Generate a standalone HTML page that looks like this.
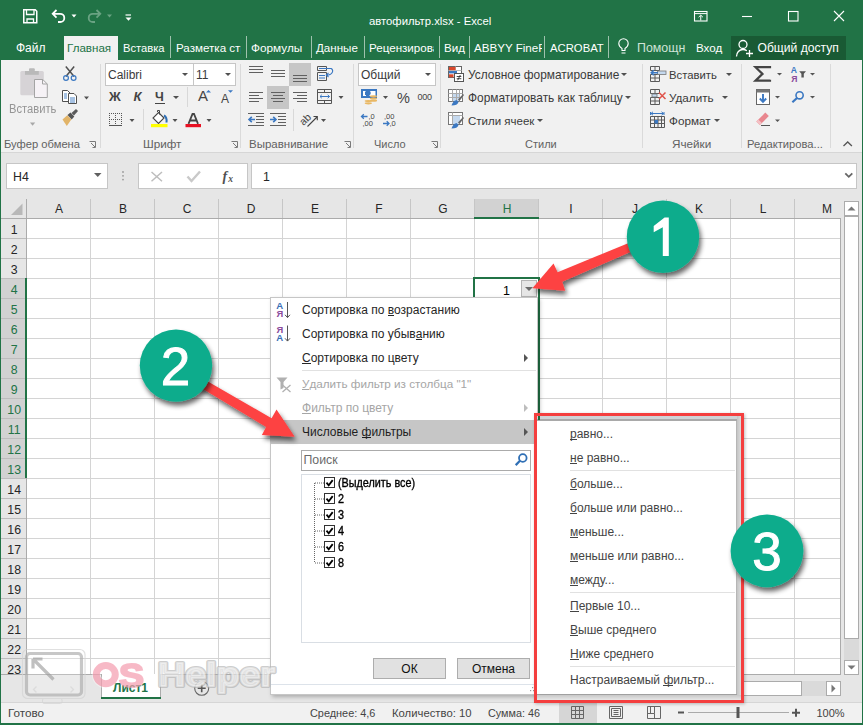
<!DOCTYPE html>
<html><head><meta charset="utf-8">
<style>
*{box-sizing:border-box;margin:0;padding:0}
html,body{width:863px;height:725px;overflow:hidden;background:#fff}
body{position:relative;font-family:"Liberation Sans",sans-serif;font-size:12px;color:#262626}
.a{position:absolute}
.t{position:absolute;white-space:nowrap;line-height:12px}
svg{position:absolute;overflow:visible}
.tab{color:#fff}
.tsep{position:absolute;top:36px;width:1px;height:22px;background:#9fc2ad}
.gsep{position:absolute;top:64px;width:1px;height:84px;background:#dadada}
.gl{position:absolute;white-space:nowrap;line-height:12px;color:#616161}
.rb{position:absolute;white-space:nowrap;line-height:12px;color:#3a3a3a}
.dd{position:absolute;width:0;height:0;border-left:3px solid transparent;border-right:3px solid transparent;border-top:3px solid #505050}
.mi{position:absolute;white-space:nowrap;line-height:12px;color:#444;left:302px}
.si{position:absolute;white-space:nowrap;line-height:12px;color:#444;left:570px}
u{text-decoration:none;border-bottom:1px solid currentColor;display:inline-block;line-height:12px;height:11.8px}
</style></head><body>

<div class="a" style="left:0;top:0;width:863px;height:60px;background:#217346"></div>
<!-- QAT -->
<svg style="left:0;top:0" width="150" height="36">
 <path d="M23.75 9.75h11.5l1.5 1.5v11.5h-13z" fill="none" stroke="#fff" stroke-width="1.5"/>
 <path d="M26.5 10v4.5h7.5V10" fill="none" stroke="#fff" stroke-width="1.3"/>
 <path d="M27 22.5v-3.5h6.5v3.5" fill="none" stroke="#fff" stroke-width="1.3"/>
 <path d="M56.5 10l-3.8 3.8 3.8 3.8M53 13.8h7.2a4.1 4.1 0 0 1 0 8.2h-2.2" fill="none" stroke="#fff" stroke-width="1.8"/>
 <path d="M71.5 14.5h5l-2.5 3z" fill="#fff"/>
 <path d="M96.5 10l3.8 3.8-3.8 3.8M100 13.8h-7.2a4.1 4.1 0 0 0 0 8.2h2.2" fill="none" stroke="#6aa383" stroke-width="1.8"/>
 <path d="M107 14.5h5l-2.5 3z" fill="#6aa383"/>
 <path d="M125.5 15h5.5" stroke="#fff" stroke-width="1.2"/>
 <path d="M125.5 17.5h6l-3 3.3z" fill="#fff"/>
</svg>
<div class="t" style="left:369px;top:15px;color:#fff;font-size:11.3px">автофильтр.xlsx - Excel</div>
<!-- window controls -->
<svg style="left:680px;top:0" width="183" height="36">
 <rect x="14.5" y="11.5" width="12.5" height="9.5" fill="none" stroke="#fff" stroke-width="1.1"/>
 <path d="M14.5 13.6h12.5" stroke="#fff" stroke-width="1"/>
 <path d="M20.75 20.5v-5M18.6 17.2l2.15-2.1 2.15 2.1" fill="none" stroke="#fff" stroke-width="1"/>
 <path d="M62 16.5h10" stroke="#fff" stroke-width="1.1"/>
 <rect x="108.5" y="11.5" width="9.5" height="9.5" fill="none" stroke="#fff" stroke-width="1.1"/>
 <path d="M154 11l10 10M164 11l-10 10" stroke="#fff" stroke-width="1.1"/>
</svg>
<!-- tabs -->
<div class="t tab" style="left:16px;top:42px">Файл</div>
<div class="a" style="left:64px;top:36px;width:54px;height:24px;background:#f1f1f1"></div>
<div class="t" style="left:67px;top:42px;color:#217346;font-size:11.6px">Главная</div>
<div class="t tab" style="left:123px;top:42px;font-size:11.2px">Вставка</div>
<div class="tsep" style="left:170px"></div>
<div class="a" style="left:175px;top:38px;width:66px;height:20px;overflow:hidden"><div class="t tab" style="left:1px;top:4px;font-size:11.6px">Разметка страницы</div></div>
<div class="tsep" style="left:246px"></div>
<div class="t tab" style="left:251px;top:42px;font-size:11.8px">Формулы</div>
<div class="tsep" style="left:311px"></div>
<div class="t tab" style="left:316px;top:42px;font-size:11.6px">Данные</div>
<div class="tsep" style="left:364px"></div>
<div class="a" style="left:368px;top:38px;width:65.5px;height:20px;overflow:hidden"><div class="t tab" style="left:1px;top:4px;font-size:11.6px">Рецензирование</div></div>
<div class="tsep" style="left:439px"></div>
<div class="t tab" style="left:444px;top:42px;font-size:11.6px">Вид</div>
<div class="tsep" style="left:469px"></div>
<div class="a" style="left:473px;top:38px;width:69px;height:20px;overflow:hidden"><div class="t tab" style="left:1px;top:4px;font-size:11.6px">ABBYY FineReader</div></div>
<div class="tsep" style="left:544px"></div>
<div class="t tab" style="left:550px;top:42px;font-size:11.3px">ACROBAT</div>
<div class="tsep" style="left:608px"></div>
<svg style="left:617px;top:38px" width="14" height="20">
 <path d="M5 12.5v-2c-2-1.2-3.2-2.7-3.2-5a4.7 4.7 0 0 1 9.4 0c0 2.3-1.2 3.8-3.2 5v2zM4.5 15h4" fill="none" stroke="#fff" stroke-width="1.1"/>
</svg>
<div class="t" style="left:637px;top:41.5px;font-size:12.4px;color:#d0e3d7">Помощн</div>
<div class="t tab" style="left:696px;top:42px;font-size:11.6px">Вход</div>
<div class="a" style="left:731px;top:36px;width:115px;height:24px;background:#195a34"></div>
<svg style="left:734px;top:37px" width="22" height="22">
 <circle cx="9" cy="7.5" r="4" fill="none" stroke="#fff" stroke-width="1.3"/>
 <path d="M2.5 19.5c0-4 2.8-7 6.5-7 1.5 0 2.8.5 3.8 1.2" fill="none" stroke="#fff" stroke-width="1.3"/>
 <path d="M15.5 13v7M12 16.5h7" stroke="#fff" stroke-width="1.3"/>
</svg>
<div class="t tab" style="left:757.5px;top:41.5px;font-size:12.1px">Общий доступ</div>

<div class="a" style="left:1px;top:60px;width:861px;height:93px;background:#f1f1f1;border-bottom:1px solid #d6d6d6"></div>
<div class="gsep" style="left:100px"></div>
<div class="gsep" style="left:240px"></div>
<div class="gsep" style="left:353px"></div>
<div class="gsep" style="left:440px"></div>
<div class="gsep" style="left:642px"></div>
<div class="gsep" style="left:741px"></div>
<div class="gsep" style="left:830px"></div>
<!-- group labels -->
<div class="gl" style="left:4px;top:138px;font-size:11.2px">Буфер обмена</div>
<div class="gl" style="left:143px;top:138px;font-size:11.7px">Шрифт</div>
<div class="gl" style="left:249px;top:138px;font-size:11.5px">Выравнивание</div>
<div class="gl" style="left:374px;top:138px;font-size:11px">Число</div>
<div class="gl" style="left:525px;top:138px;font-size:11px">Стили</div>
<div class="gl" style="left:672px;top:138px;font-size:11.7px">Ячейки</div>
<div class="gl" style="left:747px;top:138px;font-size:11.2px">Редактирова...</div>
<svg style="left:0;top:0" width="863" height="152">
 <g fill="none" stroke="#7a7a7a" stroke-width="1">
  <path d="M89.5 141.5h6v6M91 143l4 4M92.5 147.5h3"/>
  <path d="M231.5 141.5h6v6M233 143l4 4M234.5 147.5h3"/>
  <path d="M344.5 141.5h6v6M346 143l4 4M347.5 147.5h3"/>
  <path d="M431.5 141.5h6v6M433 143l4 4M434.5 147.5h3"/>
 </g>
 <path d="M843.5 146l4.2-4 4.2 4" fill="none" stroke="#555" stroke-width="1.3"/>
</svg>
<!-- Clipboard -->
<svg style="left:0;top:60px" width="100" height="80">
 <rect x="20.3" y="11" width="23.5" height="24.3" rx="1.5" fill="#d6d3d6"/>
 <rect x="25" y="11" width="13.8" height="3.8" fill="#b9b9b9"/>
 <rect x="29" y="8.3" width="5.8" height="3.2" rx="1" fill="#b9b9b9"/>
 <path d="M34.5 19.5h8.3l4.5 4.5v13.5H34.5z" fill="#f6f2f6" stroke="#a4a4a4"/>
 <path d="M42.5 19.5v4.5h4.5" fill="none" stroke="#a4a4a4"/>
 <path d="M30 62.6h5.2l-2.6 3.2z" fill="#a8a8a8"/>
 <path d="M65.8 6.5l8.3 10M74.2 6.5l-8.3 10" stroke="#505050" stroke-width="1.5"/>
 <circle cx="66" cy="18" r="2.4" fill="none" stroke="#3b78c2" stroke-width="1.2"/>
 <circle cx="73.6" cy="18" r="2.4" fill="none" stroke="#3b78c2" stroke-width="1.2"/>
 <path d="M62.5 30.5h5l2.5 2.5v8.5h-7.5z" fill="#fff" stroke="#505050"/>
 <path d="M64 34h3M64 36h3M64 38h3" stroke="#3b78c2" stroke-width=".9"/>
 <path d="M68.5 33.5h5.5l2.5 2.5v7.5h-8z" fill="#fff" stroke="#505050"/>
 <path d="M70 38h5M70 40h5M70 42h5" stroke="#3b78c2" stroke-width=".9"/>
 <path d="M84 36.5h5l-2.5 3z" fill="#505050"/>
 <path d="M62.5 59.5l4.8-4.3 4 4.4-4.5 6.4z" fill="#e2b468"/>
 <path d="M67.5 55l3-2.5 3.8 4-2.6 3z" fill="#555"/>
 <path d="M71.5 53l4.5-4 2 2-4 4.5z" fill="#5a5a5a"/>
</svg>
<div class="rb" style="left:8.5px;top:103px;color:#959595;font-size:12px;transform:scaleX(.93);transform-origin:0 0">Вставить</div>
<!-- Font group -->
<div class="a" style="left:105px;top:63px;width:89px;height:23px;background:#fff;border:1px solid #c6c6c6"></div>
<div class="a" style="left:193px;top:63px;width:43px;height:23px;background:#fff;border:1px solid #c6c6c6"></div>
<div class="rb" style="left:108px;top:69px;font-size:12px">Calibri</div>
<div class="rb" style="left:196px;top:69px;font-size:12px">11</div>
<div class="dd" style="left:182px;top:73px"></div>
<div class="dd" style="left:225px;top:73px"></div>
<div class="rb" style="left:109px;top:91px;font-size:13px;font-weight:bold;color:#444">Ж</div>
<div class="rb" style="left:133.5px;top:91px;font-size:13px;font-weight:bold;font-style:italic;color:#444">К</div>
<div class="rb" style="left:155px;top:90.5px;font-size:12.5px;font-weight:bold;color:#444">Ч</div>
<div class="a" style="left:155px;top:103px;width:10px;height:1px;background:#444"></div>
<div class="dd" style="left:173px;top:96px"></div>
<div class="a" style="left:187px;top:87px;width:1px;height:20px;background:#d8d8d8"></div>
<div class="rb" style="left:198px;top:90px;font-size:15px;color:#444">A</div>
<svg style="left:0;top:60px" width="240" height="80">
 <path d="M206 32.5l2.5-2.5 2.5 2.5z" fill="#3b78c2"/>
 <path d="M228 30.2h5l-2.5 2.5z" fill="#3b78c2"/>
 <g fill="#777"><rect x="109" y="53" width="1" height="1"/></g>
 <g fill="#555"><rect x="109" y="53" width="1" height="1"/><rect x="109" y="59" width="1" height="1"/><rect x="111" y="53" width="1" height="1"/><rect x="111" y="59" width="1" height="1"/><rect x="113" y="53" width="1" height="1"/><rect x="113" y="59" width="1" height="1"/><rect x="115" y="53" width="1" height="1"/><rect x="115" y="59" width="1" height="1"/><rect x="117" y="53" width="1" height="1"/><rect x="117" y="59" width="1" height="1"/><rect x="119" y="53" width="1" height="1"/><rect x="119" y="59" width="1" height="1"/><rect x="121" y="53" width="1" height="1"/><rect x="121" y="59" width="1" height="1"/><rect x="109" y="55" width="1" height="1"/><rect x="115" y="55" width="1" height="1"/><rect x="121" y="55" width="1" height="1"/><rect x="109" y="57" width="1" height="1"/><rect x="115" y="57" width="1" height="1"/><rect x="121" y="57" width="1" height="1"/><rect x="109" y="59" width="1" height="1"/><rect x="115" y="59" width="1" height="1"/><rect x="121" y="59" width="1" height="1"/><rect x="109" y="61" width="1" height="1"/><rect x="115" y="61" width="1" height="1"/><rect x="121" y="61" width="1" height="1"/><rect x="109" y="63" width="1" height="1"/><rect x="115" y="63" width="1" height="1"/><rect x="121" y="63" width="1" height="1"/></g>
 <path d="M109 65.5h13" stroke="#555"/>
 <path d="M129.5 59h5l-2.5 3z" fill="#505050"/>
 <path d="M158.5 52.5l5.5 5.5-5.5 5.5-5.5-5.5z" fill="#fff" stroke="#444" stroke-width="1.1"/>
 <path d="M157.5 52v-1.5h2v4" fill="none" stroke="#444" stroke-width="1"/>
 <path d="M164 55.5c2 1 3 3 2.5 7" fill="none" stroke="#2f6fb5" stroke-width="2"/>
 <rect x="151" y="64" width="16.5" height="3.2" fill="#ffff00"/>
 <path d="M172.5 59h5l-2.5 3z" fill="#505050"/>
 <path d="M188.5 63.8l4-9.8h1.5l4 9.8M190 60.5h6.5" fill="none" stroke="#444" stroke-width="1.8"/>
 <rect x="185.5" y="64" width="15.5" height="3.2" fill="#e81123"/>
 <path d="M206.5 59h5l-2.5 3z" fill="#505050"/>
</svg>
<div class="a" style="left:143px;top:109px;width:1px;height:21px;background:#d8d8d8"></div>
<div class="rb" style="left:221px;top:93px;font-size:12px;color:#444">A</div>
<!-- Alignment -->
<div class="a" style="left:289px;top:63px;width:22px;height:23px;background:#c6c6c6"></div>
<div class="a" style="left:267px;top:86px;width:22px;height:23px;background:#c6c6c6"></div>
<svg style="left:0;top:0" width="440" height="152">
 <g stroke="#606060" stroke-width="1" fill="none">
  <path d="M249 66.5h14M249 69.5h14M249 72.5h14"/>
  <path d="M271 70.5h14M271 73.5h14M271 76.5h14"/>
  <path d="M293 75.5h14M293 78.5h14M293 81.5h14"/>
  <path d="M249 92.5h14M249 95.5h10M249 98.5h14M249 101.5h10"/>
  <path d="M271 92.5h14M273 95.5h10M271 98.5h14M273 101.5h10"/>
  <path d="M293 92.5h14M297 95.5h10M293 98.5h14M297 101.5h10"/>
  <path d="M248 113.5h16M256 116.5h8M256 119.5h8M256 122.5h8M248 125.5h16"/>
  <path d="M270 113.5h16M278 116.5h8M278 119.5h8M278 122.5h8M270 125.5h16"/>
 </g>
 <path d="M255 119.5h-6M251.8 116.8L249 119.5l2.8 2.7" fill="none" stroke="#3b78c2" stroke-width="1.6"/>
 <path d="M270 119.5h6M273.2 116.8l2.8 2.7-2.8 2.7" fill="none" stroke="#3b78c2" stroke-width="1.6"/>
 <g fill="none" stroke="#555" stroke-width="1">
  <path d="M317.5 66.5h9v4h-9zM317.5 72.5h9v8h-9z"/>
 </g>
 <path d="M319 68.5h12.5M319 75.5h6M319 78h6" stroke="#3b78c2" stroke-width="1"/>
 <path d="M331 68.5c2.5 1 2.5 5.5-2.5 6.5h-2M328.5 73l-2.2 2 2.2 2" fill="none" stroke="#3b78c2" stroke-width="1.1"/>
 <g fill="none" stroke="#555" stroke-width="1">
  <path d="M317.5 89.5h14v14h-14zM317.5 92.5h14M317.5 100.5h14M324.5 89.5v3M324.5 100.5v3"/>
 </g>
 <path d="M320 96.5h9.5M321.8 94.8l-1.8 1.7 1.8 1.7M327.7 94.8l1.8 1.7-1.8 1.7" fill="none" stroke="#3b78c2" stroke-width="1"/>
 <path d="M338.5 96h5l-2.5 3z" fill="#505050"/>
 <path d="M293.5 109v22" stroke="#d8d8d8"/>
 <text x="299" y="123" font-family="Liberation Sans" font-size="10.5" fill="#444" transform="rotate(-45 305 119)">ab</text>
 <path d="M307.5 126.5l9.5-9.5M313.5 116.5h3.8v3.8" fill="none" stroke="#444" stroke-width="1.1"/>
 <path d="M321 119h5l-2.5 3z" fill="#505050"/>
</svg>
<!-- Number -->
<div class="a" style="left:358px;top:63px;width:78px;height:23px;background:#fff;border:1px solid #c6c6c6"></div>
<div class="rb" style="left:361px;top:69px;font-size:12px">Общий</div>
<div class="dd" style="left:425px;top:73px"></div>
<svg style="left:0;top:0" width="440" height="152">
 <rect x="361" y="89" width="16" height="9" fill="#3b78c2"/>
 <path d="M363 91h3l-1 1v3h1v1h-3z" fill="#fff"/>
 <path d="M369.5 91h6v5h-6z" fill="#fff"/>
 <circle cx="368.5" cy="93" r="2.3" fill="#3b78c2"/>
 <g fill="#e9b865">
  <ellipse cx="373.5" cy="96.3" rx="3.6" ry="1.1"/><ellipse cx="373.5" cy="98.5" rx="3.6" ry="1.1"/><ellipse cx="373.5" cy="100.7" rx="3.6" ry="1.1"/>
  <ellipse cx="368.3" cy="101" rx="3.6" ry="1.1"/><ellipse cx="368.3" cy="103.3" rx="3.6" ry="1.1"/>
 </g>
 <path d="M383 96h5l-2.5 3z" fill="#505050"/>
 <text x="397" y="103" font-family="Liberation Sans" font-size="14.5" fill="#444" textLength="13">%</text>
 <text x="417.5" y="100" font-family="Liberation Sans" font-size="9" fill="#444" textLength="14.5">000</text>
 <text x="368.5" y="118.5" font-family="Liberation Sans" font-size="7.5" fill="#444">,0</text>
 <text x="362.5" y="126" font-family="Liberation Sans" font-size="7.5" fill="#444">,00</text>
 <path d="M361.5 116.5h6M363.8 114.3l-2.3 2.2 2.3 2.2" fill="none" stroke="#3b78c2" stroke-width="1.3"/>
 <text x="384" y="118.5" font-family="Liberation Sans" font-size="7.5" fill="#444">,00</text>
 <text x="389.5" y="126" font-family="Liberation Sans" font-size="7.5" fill="#444">,0</text>
 <path d="M383 123.5h6M386.7 121.3l2.3 2.2-2.3 2.2" fill="none" stroke="#3b78c2" stroke-width="1.3"/>
</svg>
<!-- Styles -->
<svg style="left:0;top:0" width="863" height="152">
 <rect x="448.5" y="66.5" width="13" height="11" fill="#fff" stroke="#666"/>
 <path d="M448.5 70.5h13M455.5 66.5v11" stroke="#bbb"/>
 <rect x="449" y="67" width="6.5" height="3.2" fill="#d9482b"/>
 <rect x="449" y="71" width="8" height="2.4" fill="#3b78c2"/>
 <rect x="449" y="74.3" width="4.5" height="3" fill="#d9482b"/>
 <rect x="454.5" y="73.5" width="9" height="8" fill="#fff" stroke="#555"/>
 <path d="M456.7 76.5h4.6M456.7 78.7h4.6M460.3 75l-2.6 5.2" stroke="#333" stroke-width=".9"/>
 <rect x="448.5" y="89.5" width="14" height="12" fill="#fff" stroke="#777"/>
 <rect x="452" y="93" width="8" height="8" fill="#c5d9ef"/>
 <path d="M448.5 93.5h14M448.5 97.5h14M452.5 89.5v12M456.5 89.5v12M459.5 89.5v12" stroke="#aaa"/>
 <path d="M451.5 105.5c1-3 2.5-5 5-5.5l2 2c-.5 2.5-3 3.5-7 3.5z" fill="#3b78c2"/>
 <path d="M458 99.5l5-5.5 1 1-4.5 6z" fill="#666"/>
 <rect x="448.5" y="112.5" width="14" height="12" fill="#fff" stroke="#777"/>
 <rect x="452" y="116" width="8" height="8" fill="#c5d9ef"/>
 <path d="M448.5 115.5h14M452.5 112.5v12" stroke="#aaa"/>
 <path d="M451.5 128.5c1-3 2.5-5 5-5.5l2 2c-.5 2.5-3 3.5-7 3.5z" fill="#3b78c2"/>
 <path d="M458 122.5l5-5.5 1 1-4.5 6z" fill="#666"/>
</svg>
<div class="rb" style="left:468px;top:69px;font-size:11.9px">Условное форматирование</div>
<div class="dd" style="left:621px;top:73px"></div>
<div class="rb" style="left:468px;top:92px;font-size:11.9px">Форматировать как таблицу</div>
<div class="dd" style="left:625px;top:96px"></div>
<div class="rb" style="left:468px;top:115px;font-size:11.5px">Стили ячеек</div>
<div class="dd" style="left:537px;top:119px"></div>
<!-- Cells -->
<svg style="left:0;top:0" width="863" height="152">
 <g fill="none" stroke="#5a5a5a" stroke-width="1">
  <path d="M650.5 66.5h9v4h-9zM650.5 74.5h9v7h-9zM650.5 78h9M655 74.5v7M655 66.5v4"/>
  <path d="M650.5 89.5h9v4h-9zM650.5 97.5h9v7h-9zM650.5 101h9M655 97.5v7M655 89.5v4"/>
  <path d="M650.5 116.5h14v11h-14zM650.5 120h14M650.5 123.5h14M654.5 116.5v11M658 116.5v11M661.5 116.5v11"/>
 </g>
 <rect x="657.5" y="71" width="8.5" height="3.5" fill="#c5d9ef" stroke="#777" stroke-width=".8"/>
 <path d="M658 72.8h-6.5M653.8 70.3l-2.5 2.5 2.5 2.5" fill="none" stroke="#3b78c2" stroke-width="1.6"/>
 <rect x="652" y="94" width="5" height="3" fill="#c5d9ef" stroke="#777" stroke-width=".8"/>
 <path d="M659 92.5l6.5 6.5M665.5 92.5l-6.5 6.5" stroke="#e0534a" stroke-width="1.5"/>
 <rect x="654.5" y="120" width="3.5" height="3.5" fill="#3b78c2"/>
 <path d="M651 113.5h12.5M653 111.8l-2 1.7 2 1.7M661.5 111.8l2 1.7-2 1.7M650.5 112v3M664 112v3" fill="none" stroke="#3b78c2" stroke-width="1"/>
</svg>
<div class="rb" style="left:669px;top:69px;font-size:11.3px">Вставить</div>
<div class="dd" style="left:726px;top:73px"></div>
<div class="rb" style="left:669px;top:92px;font-size:11.7px">Удалить</div>
<div class="dd" style="left:722px;top:96px"></div>
<div class="rb" style="left:669px;top:115px;font-size:11.7px">Формат</div>
<div class="dd" style="left:714px;top:119px"></div>
<!-- Editing -->
<svg style="left:0;top:0" width="863" height="152">
 <path d="M770 68.2v-1h-14.5l7 6.7-7 6.8H770v-1" fill="none" stroke="#444" stroke-width="2.2"/>
 <path d="M777 73h5l-2.5 2.6z" fill="#555"/>
 <text x="790.8" y="72.8" font-family="Liberation Sans" font-size="8.6" font-weight="bold" fill="#3b78c2">A</text>
 <text x="791.2" y="81.8" font-family="Liberation Sans" font-size="8.6" font-weight="bold" fill="#8a4b9c">Я</text>
 <path d="M799.2 71.2h6.8l-2.2 2.6v3.6h-2.4v-3.6z" fill="#555"/>
 <path d="M810 73h5l-2.5 2.6z" fill="#555"/>
 <rect x="756.5" y="89.5" width="13" height="15" fill="#fff" stroke="#666"/>
 <rect x="756.5" y="89.5" width="13" height="3" fill="#777"/>
 <path d="M763 94v7.5M759.8 98.5l3.2 3.3 3.2-3.3" fill="none" stroke="#3b78c2" stroke-width="1.9"/>
 <path d="M775 96h5l-2.5 2.6z" fill="#555"/>
 <circle cx="799.6" cy="95.3" r="3.6" fill="none" stroke="#3b78c2" stroke-width="1.6"/>
 <path d="M797 98l-4.6 4.2" stroke="#3b78c2" stroke-width="2.2"/>
 <path d="M810 96h5l-2.5 2.6z" fill="#555"/>
 <path d="M756.3 121.6l9-9 3.5 3.5-9 9z" fill="#e9878f"/>
 <path d="M756.3 121.6l2-2 3.5 3.5-2 2z" fill="#f4c1c5"/>
 <path d="M761 125.5h9" stroke="#555"/>
 <path d="M775 119.5h5l-2.5 2.6z" fill="#555"/>
</svg>

<div class="a" style="left:1px;top:153px;width:861px;height:46px;background:#e6e6e6"></div>
<div class="a" style="left:6px;top:163px;width:102px;height:26px;background:#fff;border:1px solid #c6c6c6"></div>
<div class="t" style="left:13px;top:171px;font-size:12.3px;color:#262626">H4</div>
<div class="a" style="left:138px;top:163px;width:110px;height:26px;background:#fff;border:1px solid #c6c6c6"></div>
<div class="a" style="left:251px;top:163px;width:606px;height:26px;background:#fff;border:1px solid #c6c6c6"></div>
<div class="t" style="left:263px;top:171px;font-size:12.3px;color:#262626">1</div>
<svg style="left:0;top:150px" width="863" height="50">
 <path d="M94 23h7.5l-3.75 4z" fill="#606060"/>
 <circle cx="123" cy="22" r=".9" fill="#9a9a9a"/>
 <circle cx="123" cy="25.8" r=".9" fill="#9a9a9a"/>
 <circle cx="123" cy="29.6" r=".9" fill="#9a9a9a"/>
 <path d="M151.5 22l10.5 9.3M162 22l-10.5 9.3" stroke="#bdbdbd" stroke-width="1.5"/>
 <path d="M187.5 26.5l4 4.5 8.5-9.5" fill="none" stroke="#c9c9c9" stroke-width="2.4"/>
 <text x="222.5" y="31" font-family="Liberation Serif" font-size="14" font-weight="bold" font-style="italic" fill="#505050">f</text>
 <text x="228.3" y="31.5" font-family="Liberation Serif" font-size="9.5" font-weight="bold" font-style="italic" fill="#505050">x</text>
 <path d="M845.3 23.3l3.5 3.5 3.5-3.5" fill="none" stroke="#666" stroke-width="1.8"/>
</svg>

<div class="a" style="left:1px;top:199px;width:861px;height:503px;background:#e6e6e6"></div>
<div class="a" style="left:27px;top:219px;width:814px;height:455px;background:#fff"></div>
<div class="a" style="left:27px;top:238px;width:814px;height:1px;background:#d4d4d4"></div>
<div class="a" style="left:27px;top:258px;width:814px;height:1px;background:#d4d4d4"></div>
<div class="a" style="left:27px;top:278px;width:814px;height:1px;background:#d4d4d4"></div>
<div class="a" style="left:27px;top:298px;width:814px;height:1px;background:#d4d4d4"></div>
<div class="a" style="left:27px;top:318px;width:814px;height:1px;background:#d4d4d4"></div>
<div class="a" style="left:27px;top:338px;width:814px;height:1px;background:#d4d4d4"></div>
<div class="a" style="left:27px;top:358px;width:814px;height:1px;background:#d4d4d4"></div>
<div class="a" style="left:27px;top:378px;width:814px;height:1px;background:#d4d4d4"></div>
<div class="a" style="left:27px;top:398px;width:814px;height:1px;background:#d4d4d4"></div>
<div class="a" style="left:27px;top:418px;width:814px;height:1px;background:#d4d4d4"></div>
<div class="a" style="left:27px;top:438px;width:814px;height:1px;background:#d4d4d4"></div>
<div class="a" style="left:27px;top:458px;width:814px;height:1px;background:#d4d4d4"></div>
<div class="a" style="left:27px;top:478px;width:814px;height:1px;background:#d4d4d4"></div>
<div class="a" style="left:27px;top:498px;width:814px;height:1px;background:#d4d4d4"></div>
<div class="a" style="left:27px;top:518px;width:814px;height:1px;background:#d4d4d4"></div>
<div class="a" style="left:27px;top:538px;width:814px;height:1px;background:#d4d4d4"></div>
<div class="a" style="left:27px;top:558px;width:814px;height:1px;background:#d4d4d4"></div>
<div class="a" style="left:27px;top:578px;width:814px;height:1px;background:#d4d4d4"></div>
<div class="a" style="left:27px;top:598px;width:814px;height:1px;background:#d4d4d4"></div>
<div class="a" style="left:27px;top:618px;width:814px;height:1px;background:#d4d4d4"></div>
<div class="a" style="left:27px;top:638px;width:814px;height:1px;background:#d4d4d4"></div>
<div class="a" style="left:27px;top:658px;width:814px;height:1px;background:#d4d4d4"></div>
<div class="a" style="left:90px;top:219px;width:1px;height:455px;background:#d4d4d4"></div>
<div class="a" style="left:154px;top:219px;width:1px;height:455px;background:#d4d4d4"></div>
<div class="a" style="left:218px;top:219px;width:1px;height:455px;background:#d4d4d4"></div>
<div class="a" style="left:282px;top:219px;width:1px;height:455px;background:#d4d4d4"></div>
<div class="a" style="left:346px;top:219px;width:1px;height:455px;background:#d4d4d4"></div>
<div class="a" style="left:410px;top:219px;width:1px;height:455px;background:#d4d4d4"></div>
<div class="a" style="left:474px;top:219px;width:1px;height:455px;background:#d4d4d4"></div>
<div class="a" style="left:538px;top:219px;width:1px;height:455px;background:#d4d4d4"></div>
<div class="a" style="left:602px;top:219px;width:1px;height:455px;background:#d4d4d4"></div>
<div class="a" style="left:666px;top:219px;width:1px;height:455px;background:#d4d4d4"></div>
<div class="a" style="left:730px;top:219px;width:1px;height:455px;background:#d4d4d4"></div>
<div class="a" style="left:794px;top:219px;width:1px;height:455px;background:#d4d4d4"></div>
<div class="a" style="left:840px;top:218px;width:1px;height:457px;background:#ababab"></div>
<div class="a" style="left:26px;top:674px;width:815px;height:1px;background:#ababab"></div>
<div class="a" style="left:1px;top:218px;width:840px;height:1px;background:#ababab"></div>
<div class="a" style="left:26px;top:199px;width:1px;height:476px;background:#ababab"></div>
<div class="a" style="left:90px;top:199px;width:1px;height:19px;background:#c6c6c6"></div>
<div class="a" style="left:154px;top:199px;width:1px;height:19px;background:#c6c6c6"></div>
<div class="a" style="left:218px;top:199px;width:1px;height:19px;background:#c6c6c6"></div>
<div class="a" style="left:282px;top:199px;width:1px;height:19px;background:#c6c6c6"></div>
<div class="a" style="left:346px;top:199px;width:1px;height:19px;background:#c6c6c6"></div>
<div class="a" style="left:410px;top:199px;width:1px;height:19px;background:#c6c6c6"></div>
<div class="a" style="left:474px;top:199px;width:1px;height:19px;background:#c6c6c6"></div>
<div class="a" style="left:538px;top:199px;width:1px;height:19px;background:#c6c6c6"></div>
<div class="a" style="left:602px;top:199px;width:1px;height:19px;background:#c6c6c6"></div>
<div class="a" style="left:666px;top:199px;width:1px;height:19px;background:#c6c6c6"></div>
<div class="a" style="left:730px;top:199px;width:1px;height:19px;background:#c6c6c6"></div>
<div class="a" style="left:794px;top:199px;width:1px;height:19px;background:#c6c6c6"></div>
<div class="a" style="left:474px;top:199px;width:65px;height:19px;background:#d2d2d2;border-left:1px solid #c6c6c6;border-right:1px solid #c6c6c6"></div>
<div class="a" style="left:474px;top:217px;width:65px;height:2px;background:#217346"></div>
<div class="t" style="left:27px;width:64px;top:203px;text-align:center;color:#262626">A</div>
<div class="t" style="left:91px;width:64px;top:203px;text-align:center;color:#262626">B</div>
<div class="t" style="left:155px;width:64px;top:203px;text-align:center;color:#262626">C</div>
<div class="t" style="left:219px;width:64px;top:203px;text-align:center;color:#262626">D</div>
<div class="t" style="left:283px;width:64px;top:203px;text-align:center;color:#262626">E</div>
<div class="t" style="left:347px;width:64px;top:203px;text-align:center;color:#262626">F</div>
<div class="t" style="left:411px;width:64px;top:203px;text-align:center;color:#262626">G</div>
<div class="t" style="left:475px;width:64px;top:203px;text-align:center;color:#217346">H</div>
<div class="t" style="left:539px;width:64px;top:203px;text-align:center;color:#262626">I</div>
<div class="t" style="left:603px;width:64px;top:203px;text-align:center;color:#262626">J</div>
<div class="t" style="left:667px;width:64px;top:203px;text-align:center;color:#262626">K</div>
<div class="t" style="left:731px;width:64px;top:203px;text-align:center;color:#262626">L</div>
<div class="t" style="left:795px;width:64px;top:203px;text-align:center;color:#262626">M</div>
<svg style="left:0;top:199px" width="27" height="20"><path d="M22.5 4.5V16H11z" fill="#b8b8b8"/></svg>
<div class="a" style="left:1px;top:238px;width:25px;height:1px;background:#bdbdbd"></div>
<div class="a" style="left:1px;top:218px;width:25px;height:20px;overflow:hidden"><div class="t" style="left:0.7px;width:25px;top:5.5px;text-align:center;color:#262626;font-size:12.3px">1</div></div>
<div class="a" style="left:1px;top:258px;width:25px;height:1px;background:#bdbdbd"></div>
<div class="a" style="left:1px;top:238px;width:25px;height:20px;overflow:hidden"><div class="t" style="left:0.7px;width:25px;top:5.5px;text-align:center;color:#262626;font-size:12.3px">2</div></div>
<div class="a" style="left:1px;top:278px;width:25px;height:1px;background:#bdbdbd"></div>
<div class="a" style="left:1px;top:258px;width:25px;height:20px;overflow:hidden"><div class="t" style="left:0.7px;width:25px;top:5.5px;text-align:center;color:#262626;font-size:12.3px">3</div></div>
<div class="a" style="left:1px;top:279px;width:25px;height:19px;background:#d2d2d2"></div>
<div class="a" style="left:1px;top:298px;width:25px;height:1px;background:#bdbdbd"></div>
<div class="a" style="left:1px;top:278px;width:25px;height:20px;overflow:hidden"><div class="t" style="left:0.7px;width:25px;top:5.5px;text-align:center;color:#217346;font-size:12.3px">4</div></div>
<div class="a" style="left:1px;top:299px;width:25px;height:19px;background:#d2d2d2"></div>
<div class="a" style="left:1px;top:318px;width:25px;height:1px;background:#bdbdbd"></div>
<div class="a" style="left:1px;top:298px;width:25px;height:20px;overflow:hidden"><div class="t" style="left:0.7px;width:25px;top:5.5px;text-align:center;color:#217346;font-size:12.3px">5</div></div>
<div class="a" style="left:1px;top:319px;width:25px;height:19px;background:#d2d2d2"></div>
<div class="a" style="left:1px;top:338px;width:25px;height:1px;background:#bdbdbd"></div>
<div class="a" style="left:1px;top:318px;width:25px;height:20px;overflow:hidden"><div class="t" style="left:0.7px;width:25px;top:5.5px;text-align:center;color:#217346;font-size:12.3px">6</div></div>
<div class="a" style="left:1px;top:339px;width:25px;height:19px;background:#d2d2d2"></div>
<div class="a" style="left:1px;top:358px;width:25px;height:1px;background:#bdbdbd"></div>
<div class="a" style="left:1px;top:338px;width:25px;height:20px;overflow:hidden"><div class="t" style="left:0.7px;width:25px;top:5.5px;text-align:center;color:#217346;font-size:12.3px">7</div></div>
<div class="a" style="left:1px;top:359px;width:25px;height:19px;background:#d2d2d2"></div>
<div class="a" style="left:1px;top:378px;width:25px;height:1px;background:#bdbdbd"></div>
<div class="a" style="left:1px;top:358px;width:25px;height:20px;overflow:hidden"><div class="t" style="left:0.7px;width:25px;top:5.5px;text-align:center;color:#217346;font-size:12.3px">8</div></div>
<div class="a" style="left:1px;top:379px;width:25px;height:19px;background:#d2d2d2"></div>
<div class="a" style="left:1px;top:398px;width:25px;height:1px;background:#bdbdbd"></div>
<div class="a" style="left:1px;top:378px;width:25px;height:20px;overflow:hidden"><div class="t" style="left:0.7px;width:25px;top:5.5px;text-align:center;color:#217346;font-size:12.3px">9</div></div>
<div class="a" style="left:1px;top:399px;width:25px;height:19px;background:#d2d2d2"></div>
<div class="a" style="left:1px;top:418px;width:25px;height:1px;background:#bdbdbd"></div>
<div class="a" style="left:1px;top:398px;width:25px;height:20px;overflow:hidden"><div class="t" style="left:0.7px;width:25px;top:5.5px;text-align:center;color:#217346;font-size:12.3px">10</div></div>
<div class="a" style="left:1px;top:419px;width:25px;height:19px;background:#d2d2d2"></div>
<div class="a" style="left:1px;top:438px;width:25px;height:1px;background:#bdbdbd"></div>
<div class="a" style="left:1px;top:418px;width:25px;height:20px;overflow:hidden"><div class="t" style="left:0.7px;width:25px;top:5.5px;text-align:center;color:#217346;font-size:12.3px">11</div></div>
<div class="a" style="left:1px;top:439px;width:25px;height:19px;background:#d2d2d2"></div>
<div class="a" style="left:1px;top:458px;width:25px;height:1px;background:#bdbdbd"></div>
<div class="a" style="left:1px;top:438px;width:25px;height:20px;overflow:hidden"><div class="t" style="left:0.7px;width:25px;top:5.5px;text-align:center;color:#217346;font-size:12.3px">12</div></div>
<div class="a" style="left:1px;top:459px;width:25px;height:19px;background:#d2d2d2"></div>
<div class="a" style="left:1px;top:478px;width:25px;height:1px;background:#bdbdbd"></div>
<div class="a" style="left:1px;top:458px;width:25px;height:20px;overflow:hidden"><div class="t" style="left:0.7px;width:25px;top:5.5px;text-align:center;color:#217346;font-size:12.3px">13</div></div>
<div class="a" style="left:1px;top:498px;width:25px;height:1px;background:#bdbdbd"></div>
<div class="a" style="left:1px;top:478px;width:25px;height:20px;overflow:hidden"><div class="t" style="left:0.7px;width:25px;top:5.5px;text-align:center;color:#262626;font-size:12.3px">14</div></div>
<div class="a" style="left:1px;top:518px;width:25px;height:1px;background:#bdbdbd"></div>
<div class="a" style="left:1px;top:498px;width:25px;height:20px;overflow:hidden"><div class="t" style="left:0.7px;width:25px;top:5.5px;text-align:center;color:#262626;font-size:12.3px">15</div></div>
<div class="a" style="left:1px;top:538px;width:25px;height:1px;background:#bdbdbd"></div>
<div class="a" style="left:1px;top:518px;width:25px;height:20px;overflow:hidden"><div class="t" style="left:0.7px;width:25px;top:5.5px;text-align:center;color:#262626;font-size:12.3px">16</div></div>
<div class="a" style="left:1px;top:558px;width:25px;height:1px;background:#bdbdbd"></div>
<div class="a" style="left:1px;top:538px;width:25px;height:20px;overflow:hidden"><div class="t" style="left:0.7px;width:25px;top:5.5px;text-align:center;color:#262626;font-size:12.3px">17</div></div>
<div class="a" style="left:1px;top:578px;width:25px;height:1px;background:#bdbdbd"></div>
<div class="a" style="left:1px;top:558px;width:25px;height:20px;overflow:hidden"><div class="t" style="left:0.7px;width:25px;top:5.5px;text-align:center;color:#262626;font-size:12.3px">18</div></div>
<div class="a" style="left:1px;top:598px;width:25px;height:1px;background:#bdbdbd"></div>
<div class="a" style="left:1px;top:578px;width:25px;height:20px;overflow:hidden"><div class="t" style="left:0.7px;width:25px;top:5.5px;text-align:center;color:#262626;font-size:12.3px">19</div></div>
<div class="a" style="left:1px;top:618px;width:25px;height:1px;background:#bdbdbd"></div>
<div class="a" style="left:1px;top:598px;width:25px;height:20px;overflow:hidden"><div class="t" style="left:0.7px;width:25px;top:5.5px;text-align:center;color:#262626;font-size:12.3px">20</div></div>
<div class="a" style="left:1px;top:638px;width:25px;height:1px;background:#bdbdbd"></div>
<div class="a" style="left:1px;top:618px;width:25px;height:20px;overflow:hidden"><div class="t" style="left:0.7px;width:25px;top:5.5px;text-align:center;color:#262626;font-size:12.3px">21</div></div>
<div class="a" style="left:1px;top:658px;width:25px;height:1px;background:#bdbdbd"></div>
<div class="a" style="left:1px;top:638px;width:25px;height:20px;overflow:hidden"><div class="t" style="left:0.7px;width:25px;top:5.5px;text-align:center;color:#262626;font-size:12.3px">22</div></div>

<div class="a" style="left:1px;top:658px;width:25px;height:16px;overflow:hidden"><div class="t" style="left:0.7px;width:25px;top:5.5px;text-align:center;color:#262626;font-size:12.3px">23</div></div>
<div class="a" style="left:25px;top:278px;width:2px;height:200px;background:#217346"></div>
<div class="a" style="left:473px;top:277px;width:67px;height:2px;background:#217346"></div>
<div class="a" style="left:473px;top:277px;width:2px;height:21px;background:#217346"></div>
<div class="a" style="left:538px;top:277px;width:2px;height:203px;background:#217346"></div>
<div class="a" style="left:473px;top:477px;width:67px;height:2px;background:#217346"></div>
<div class="t" style="left:503px;top:284.5px;font-size:12.5px;color:#000">1</div>
<div class="a" style="left:521px;top:280px;width:16px;height:17px;background:#e6e6e6;border:1px solid #b4b4b4"></div>
<svg style="left:521px;top:280px" width="16" height="17"><path d="M4 7h8l-4 4z" fill="#6b6b6b"/></svg>
<div class="a" style="left:844px;top:201px;width:15px;height:474px;background:#dadada"></div>
<div class="a" style="left:844px;top:201px;width:15px;height:15px;background:#fff;border:1px solid #ababab"></div>
<svg style="left:844px;top:201px" width="15" height="15"><path d="M3.5 9.5h8L7.5 5.5z" fill="#777"/></svg>
<div class="a" style="left:844px;top:216px;width:15px;height:423px;background:#fff;border:1px solid #ababab"></div>
<div class="a" style="left:844px;top:660px;width:15px;height:15px;background:#fff;border:1px solid #ababab"></div>
<svg style="left:844px;top:660px" width="15" height="15"><path d="M3.5 5.5h8L7.5 9.5z" fill="#777"/></svg>
<div class="a" style="left:540px;top:681px;width:301px;height:15px;background:#dadada"></div>
<div class="a" style="left:540px;top:681px;width:262px;height:15px;background:#fff;border:1px solid #ababab"></div>
<div class="a" style="left:826px;top:681px;width:15px;height:15px;background:#fff;border:1px solid #ababab"></div>
<svg style="left:826px;top:681px" width="15" height="15"><path d="M5.5 3.5v8l4-4z" fill="#777"/></svg>
<div class="a" style="left:1px;top:674px;width:100px;height:1px;background:#ababab"></div>
<div class="a" style="left:101px;top:674px;width:60px;height:25px;background:#fff;border-left:1px solid #ababab;border-right:1px solid #ababab"></div>
<div class="a" style="left:101px;top:697px;width:60px;height:2px;background:#217346"></div>
<div class="t" style="left:113px;top:681.5px;font-weight:bold;color:#217346;font-size:12px">Лист1</div>
<svg style="left:190px;top:677px" width="24" height="24"><circle cx="11.7" cy="11.3" r="7" fill="none" stroke="#666" stroke-width="1.1"/><path d="M11.7 7.3v8M7.7 11.3h8" stroke="#555" stroke-width="1.6"/></svg>
<div class="a" style="left:1px;top:702px;width:861px;height:21px;background:#f1f1f1;border-top:1px solid #d6d6d6"></div>
<div class="a" style="left:0;top:723px;width:863px;height:2px;background:#217346"></div>
<div class="a" style="left:0;top:0;width:1px;height:725px;background:#217346"></div>
<div class="a" style="left:862px;top:0;width:1px;height:725px;background:#217346"></div>
<div class="t" style="left:8px;top:707px;font-size:11.7px;color:#444">Готово</div>
<div class="t" style="left:310px;top:707px;font-size:10.9px;color:#444">Среднее: 4,6</div>
<div class="t" style="left:392px;top:707px;font-size:11.3px;color:#444">Количество: 10</div>
<div class="t" style="left:488px;top:707px;font-size:10.8px;color:#444">Сумма: 46</div>
<div class="a" style="left:559px;top:703px;width:38px;height:20px;background:#d6d6d6"></div>
<svg style="left:0;top:695px" width="863" height="30">
 <g fill="none" stroke="#666" stroke-width="1">
  <path d="M571.5 11.5h12v12h-12zM575.5 11.5v12M579.5 11.5v12M571.5 15.5h12M571.5 19.5h12"/>
  <path d="M609.5 11.5h13v12h-13z"/>
  <path d="M611.5 13.5h9v8h-9z"/>
  <path d="M613.5 15.5h5M613.5 17.5h5M613.5 19.5h5"/>
  <path d="M647.5 11.5h13v12h-13zM647.5 18.5h7v5M650.5 11.5v7M654.5 11.5v7"/>
 </g>
 <path d="M678 17.5h6" stroke="#555" stroke-width="2"/>
 <path d="M688 17.5h101" stroke="#aaa" stroke-width="1"/>
 <rect x="736.5" y="12" width="3" height="11" fill="#555"/>
 <path d="M792 17.8h8M796 13.8v8" stroke="#555" stroke-width="2"/>
</svg>
<div class="t" style="left:816.5px;top:707px;font-size:11px;color:#444">100%</div>

<div class="a" style="left:270px;top:297px;width:268px;height:398px;background:#fff;border:1px solid #c6c6c6;box-shadow:2px 2px 4px rgba(0,0,0,.25)"></div>
<div class="mi" style="top:304px;color:#262626;font-size:12px">Сортировка по <u>в</u>озрастанию</div>
<div class="mi" style="top:328px;color:#262626;font-size:12px">Сортировка по убыв<u>а</u>нию</div>
<div class="mi" style="top:352px;color:#262626;font-size:12px"><u>С</u>ортировка по цвету</div>
<div class="a" style="left:302px;top:370px;width:234px;height:1px;background:#e1e1e1"></div>
<div class="mi" style="top:378px;color:#a6a6a6;font-size:11.7px"><u>У</u>далить фильтр из столбца "1"</div>
<div class="mi" style="top:402px;color:#a6a6a6;font-size:12px"><u>Ф</u>ильтр по цвету</div>
<div class="a" style="left:271px;top:420px;width:266px;height:24px;background:#c6c6c6"></div>
<div class="mi" style="top:426px;color:#1e1e1e;font-size:12px">Числовые <u>ф</u>ильтры</div>
<svg style="left:0;top:0" width="863" height="725"><path d="M524 354v8l4-4z" fill="#555"/><path d="M524 404v8l4-4z" fill="#bdbdbd"/><path d="M524 428v8l4-4z" fill="#555"/><text x="276.2" y="308.7" font-family="Liberation Sans" font-size="9.6" font-weight="bold" fill="#3a6fb7">A</text><text x="276.6" y="317" font-family="Liberation Sans" font-size="9.4" font-weight="bold" fill="#8a4b9c">Я</text><path d="M287.5 302v15.5M285 314.8l2.5 2.8 2.5-2.8" fill="none" stroke="#555" stroke-width="1"/><text x="276.6" y="332.8" font-family="Liberation Sans" font-size="9.4" font-weight="bold" fill="#8a4b9c">Я</text><text x="276.2" y="340.6" font-family="Liberation Sans" font-size="9.6" font-weight="bold" fill="#3a6fb7">A</text><path d="M287.5 325.5v15.5M285 338.3l2.5 2.8 2.5-2.8" fill="none" stroke="#555" stroke-width="1"/><path d="M276.5 377.5h11l-4 4.5v6l-3 1.5v-7.5z" fill="#b0b0b0"/><path d="M282.5 385l8 7M290.5 385l-8 7" stroke="#b0b0b0" stroke-width="1.3"/></svg>
<div class="a" style="left:301px;top:450px;width:230px;height:21px;background:#fff;border:1px solid #ababab"></div>
<div class="t" style="left:303.5px;top:454px;font-size:12.3px;color:#6a6a6a">Поиск</div>
<svg style="left:510px;top:450px" width="21" height="21"><circle cx="12.8" cy="8" r="3.8" fill="none" stroke="#2f6fb5" stroke-width="1.8"/><path d="M10 10.8l-4.3 4.3" stroke="#2f6fb5" stroke-width="2.2"/></svg>
<div class="a" style="left:301px;top:474px;width:230px;height:169px;background:#fff;border:1px solid #d9dee4"></div>
<div class="t" style="left:338px;top:477.0px;font-size:12px;color:#000;-webkit-text-stroke:.35px #000;transform:scaleX(.9);transform-origin:0 0">(Выделить все)</div>
<div class="t" style="left:338px;top:493.0px;font-size:12px;color:#000;-webkit-text-stroke:.35px #000;transform:scaleX(.9);transform-origin:0 0">2</div>
<div class="t" style="left:338px;top:509.0px;font-size:12px;color:#000;-webkit-text-stroke:.35px #000;transform:scaleX(.9);transform-origin:0 0">3</div>
<div class="t" style="left:338px;top:525.0px;font-size:12px;color:#000;-webkit-text-stroke:.35px #000;transform:scaleX(.9);transform-origin:0 0">4</div>
<div class="t" style="left:338px;top:541.0px;font-size:12px;color:#000;-webkit-text-stroke:.35px #000;transform:scaleX(.9);transform-origin:0 0">6</div>
<div class="t" style="left:338px;top:557.0px;font-size:12px;color:#000;-webkit-text-stroke:.35px #000;transform:scaleX(.9);transform-origin:0 0">8</div>
<svg style="left:0;top:0" width="863" height="725"><rect x="324.5" y="477.5" width="10" height="10" fill="#fff" stroke="#333" stroke-width="1"/><path d="M326.5 482.7l2.2 2.6 4-5.2" fill="none" stroke="#000" stroke-width="1.8"/><path d="M315 483.0h9" stroke="#666" stroke-width="1" stroke-dasharray="1 1"/><rect x="324.5" y="493.5" width="10" height="10" fill="#fff" stroke="#333" stroke-width="1"/><path d="M326.5 498.7l2.2 2.6 4-5.2" fill="none" stroke="#000" stroke-width="1.8"/><path d="M315 499.0h9" stroke="#666" stroke-width="1" stroke-dasharray="1 1"/><rect x="324.5" y="509.5" width="10" height="10" fill="#fff" stroke="#333" stroke-width="1"/><path d="M326.5 514.7l2.2 2.6 4-5.2" fill="none" stroke="#000" stroke-width="1.8"/><path d="M315 515.0h9" stroke="#666" stroke-width="1" stroke-dasharray="1 1"/><rect x="324.5" y="525.5" width="10" height="10" fill="#fff" stroke="#333" stroke-width="1"/><path d="M326.5 530.7l2.2 2.6 4-5.2" fill="none" stroke="#000" stroke-width="1.8"/><path d="M315 531.0h9" stroke="#666" stroke-width="1" stroke-dasharray="1 1"/><rect x="324.5" y="541.5" width="10" height="10" fill="#fff" stroke="#333" stroke-width="1"/><path d="M326.5 546.7l2.2 2.6 4-5.2" fill="none" stroke="#000" stroke-width="1.8"/><path d="M315 547.0h9" stroke="#666" stroke-width="1" stroke-dasharray="1 1"/><rect x="324.5" y="557.5" width="10" height="10" fill="#fff" stroke="#333" stroke-width="1"/><path d="M326.5 562.7l2.2 2.6 4-5.2" fill="none" stroke="#000" stroke-width="1.8"/><path d="M315 563.0h9" stroke="#666" stroke-width="1" stroke-dasharray="1 1"/><path d="M314.5 483v80" stroke="#666" stroke-width="1" stroke-dasharray="1 1"/></svg>
<div class="a" style="left:271px;top:684px;width:266px;height:1px;background:#dde3ea"></div>
<div class="a" style="left:373px;top:658px;width:73px;height:21px;background:#e1e1e1;border:1px solid #adadad"></div>
<div class="a" style="left:457px;top:658px;width:73px;height:21px;background:#e1e1e1;border:1px solid #adadad"></div>
<div class="t" style="left:373px;width:73px;top:663px;text-align:center;font-size:12px;color:#111">ОК</div>
<div class="t" style="left:457px;width:73px;top:663px;text-align:center;font-size:12px;color:#111">Отмена</div>
<svg style="left:520px;top:680px" width="20" height="20"><g fill="#999"><rect x="12" y="7" width="1.2" height="1.2"/><rect x="10" y="10" width="1.2" height="1.2"/><rect x="13" y="10" width="1.2" height="1.2"/></g></svg>
<div class="a" style="left:536px;top:416px;width:206px;height:284px;background:linear-gradient(90deg,#fff 0,#fff 200px,#a8a8a8 200px,#c4c4c4 201px,#dcdcdc 205px)"></div>
<div class="a" style="left:536px;top:416px;width:201px;height:3px;background:#cfd3d7"></div>
<div class="a" style="left:536px;top:419px;width:201px;height:2px;background:#a9a9a9"></div>
<div class="a" style="left:536px;top:694px;width:201px;height:1px;background:#a0a0a0"></div>
<div class="a" style="left:536px;top:695px;width:206px;height:5px;background:linear-gradient(#c8c8c8,#e6e6e6)"></div>
<div class="si" style="top:428px"><u>р</u>авно...</div>
<div class="si" style="top:452px"><u>н</u>е равно...</div>
<div class="si" style="top:478px"><u>б</u>ольше...</div>
<div class="si" style="top:502px"><u>б</u>ольше или равно...</div>
<div class="si" style="top:526px"><u>м</u>еньше...</div>
<div class="si" style="top:550px"><u>м</u>еньше или равно...</div>
<div class="si" style="top:574px"><u>м</u>ежду...</div>
<div class="si" style="top:600px"><u>П</u>ервые 10...</div>
<div class="si" style="top:624px"><u>В</u>ыше среднего</div>
<div class="si" style="top:648px"><u>Н</u>иже среднего</div>
<div class="si" style="top:674px">Настраиваемый <u>ф</u>ильтр...</div>
<div class="a" style="left:570px;top:470px;width:165px;height:1px;background:#e1e1e1"></div>
<div class="a" style="left:570px;top:592px;width:165px;height:1px;background:#e1e1e1"></div>
<div class="a" style="left:570px;top:666px;width:165px;height:1px;background:#e1e1e1"></div>
<div class="a" style="left:538px;top:416px;width:2px;height:4px;background:#1d6b3e"></div>
<!-- watermark -->
<svg style="left:0;top:0" width="863" height="725">
 <g opacity=".7">
  <rect x="22.5" y="649.5" width="62.5" height="49" rx="5" fill="none" stroke="#d4d4d4" stroke-width="1.2"/>
  <rect x="26.5" y="653.5" width="55" height="41.5" rx="3.5" fill="rgba(255,255,255,.3)" stroke="#b0b0b0" stroke-width="3.2"/>
  <path d="M53.5 679.5L34 660M33 659v9.5M33 659h9.5" fill="none" stroke="#a6a6a6" stroke-width="3.2"/>
  <path d="M36.5 686.5l-3 3 3 3M70.5 686.5l3 3-3 3" fill="none" stroke="#d8d8d8" stroke-width="1.4"/>
  <rect x="42.5" y="698.5" width="19.5" height="5" rx="1.5" fill="none" stroke="#d4d4d4" stroke-width="1"/>
 </g>
 <g opacity=".72">
  <ellipse cx="105.8" cy="674.6" rx="9.5" ry="9.1" fill="none" stroke="#fff" stroke-opacity=".5" stroke-width="9"/>
  <ellipse cx="105.8" cy="674.6" rx="9.5" ry="9.1" fill="none" stroke="#f59fb1" stroke-width="7"/>
  <text x="119" y="687" font-family="Liberation Sans" font-size="34" font-weight="bold" fill="#f59fb1" stroke="#f59fb1" stroke-width="2" textLength="25" lengthAdjust="spacingAndGlyphs">S</text>
 </g>
 <g font-family="Liberation Sans" font-size="33" font-weight="bold" textLength="117" lengthAdjust="spacingAndGlyphs">
  <text x="158" y="686" fill="none" stroke="#acacac" stroke-opacity=".6" stroke-width="4.2" stroke-linejoin="round" textLength="117" lengthAdjust="spacingAndGlyphs">Helper</text>
  <text x="158" y="686" fill="#fafafa" fill-opacity=".5" stroke="#fafafa" stroke-opacity=".5" stroke-width="1.8" stroke-linejoin="round" textLength="117" lengthAdjust="spacingAndGlyphs">Helper</text>
 </g>
</svg>
<!-- red rectangle -->
<div class="a" style="left:534px;top:413px;width:210px;height:290px;border:3px solid #f43f3f;box-shadow:1px 1px 3px rgba(0,0,0,.25)"></div>
<svg style="left:0;top:0" width="863" height="725">
 <defs>
  <filter id="sh" x="-20%" y="-20%" width="150%" height="150%">
   <feGaussianBlur in="SourceAlpha" stdDeviation="2.5"/>
   <feOffset dx="2" dy="3.5" result="b"/>
   <feComponentTransfer><feFuncA type="linear" slope=".6"/></feComponentTransfer>
   <feMerge><feMergeNode/><feMergeNode in="SourceGraphic"/></feMerge>
  </filter>
 </defs>
 <g filter="url(#sh)" fill="#fd4242">
  <path d="M532.4 288.3L553.5 263.5L557.6 272.3L636 239.9L636 249.5L562.2 281.8L565.2 290.7Z"/>
  <path d="M294.7 436.8L276.5 409.4L271.6 418.2L181 366L176.3 373L266.1 427L261.9 434.9Z"/>
 </g>
 <g filter="url(#sh)" fill="#0eac8c">
  <circle cx="663" cy="236.7" r="36.2"/>
  <circle cx="176" cy="365.6" r="36.2"/>
  <circle cx="767" cy="550.9" r="36.4"/>
 </g>
 <path d="M668.8 217.6V255.9H662.8V227.2L653.7 232.2V225.9L664.6 217.6Z" fill="#fff"/>
 <g font-family="Liberation Sans" font-size="53" fill="#fff" stroke="#fff" stroke-width=".9" text-anchor="middle">
  <text x="175.5" y="384.8">2</text>
  <text x="767" y="570.3">3</text>
 </g>
</svg>

</body></html>
